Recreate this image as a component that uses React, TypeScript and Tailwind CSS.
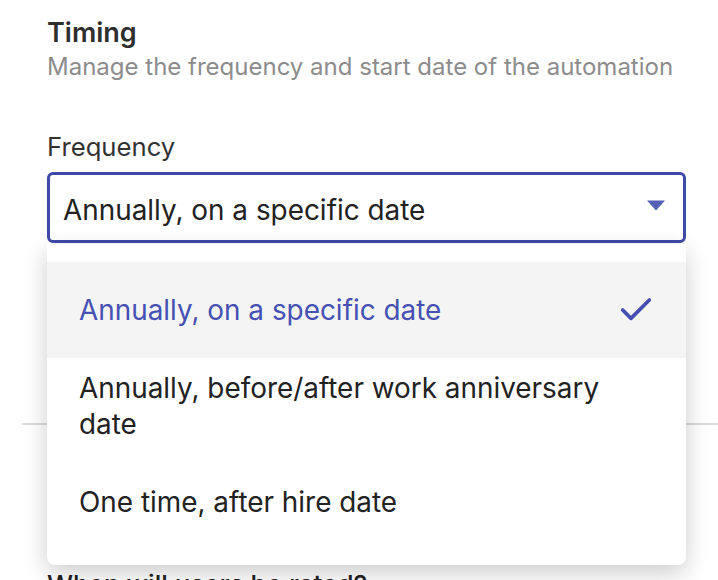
import { Check } from "lucide-react";

const options = [
  "Annually, on a specific date",
  "Annually, before/after work anniversary date",
  "One time, after hire date",
];

export default function App() {
  return (
    <div
      className="relative w-[718px] h-[580px] overflow-hidden bg-white text-[#222]"
      style={{ fontFamily: "Inter, 'Noto Sans', sans-serif" }}
    >
      <div className="pl-[22px]">
        <div className="pl-[25px] pr-[32px] pt-[16px]">
          <h2 className="text-[27px] leading-[34px] font-semibold text-[#2f2f2f]">Timing</h2>
          <p className="mt-[2px] text-[24px] leading-[30px] text-[#8c8c8c]">
            Manage the frequency and start date of the automation
          </p>

          <label className="block mt-[50px] text-[25.7px] leading-[30px] text-[#333]">Frequency</label>
          <div className="relative mt-[10px] h-[71px] rounded-[6px] border-[3px] border-[#3f4aa8] flex items-center pl-[13px] pr-[16px] pt-[4px]">
            <span className="flex-1 text-[27.9px] leading-[36px]">Annually, on a specific date</span>
            <svg width="20" height="11" viewBox="0 0 20 11" className="mr-[1px] -mt-[8px]">
              <path d="M1 0.5h18L10 10.5z" fill="#5461b6" />
            </svg>
          </div>
        </div>
        <div className="h-[180px]" />
        <div className="h-[2px] bg-[#dcdcdc]" />
        <div className="pl-[25px] mt-[140px] text-[26px] font-medium text-[#222]">
          When will users be rated?
        </div>
      </div>

      {/* open menu */}
      <div className="absolute left-[47px] top-[244px] w-[639px] bg-white rounded-b-[8px] shadow-[0_8px_24px_rgba(0,0,0,0.2)] pt-[18px] pb-[15px]">
        {options.map((o, i) => (
          <div
            key={o}
            className={
              i === 0
                ? "h-[96px] flex items-center bg-[#f4f4f4] pl-[32px] pr-[30px] text-[27.9px] leading-[36px] text-[#4651b3]"
                : "h-[96px] flex items-center pl-[32px] pr-[70px] text-[27.9px] leading-[36px] text-[#222]"
            }
          >
            <span className="flex-1">{o}</span>
            {i === 0 && <Check size={40} strokeWidth={2.2} color="#4450b0" />}
          </div>
        ))}
      </div>
    </div>
  );
}
